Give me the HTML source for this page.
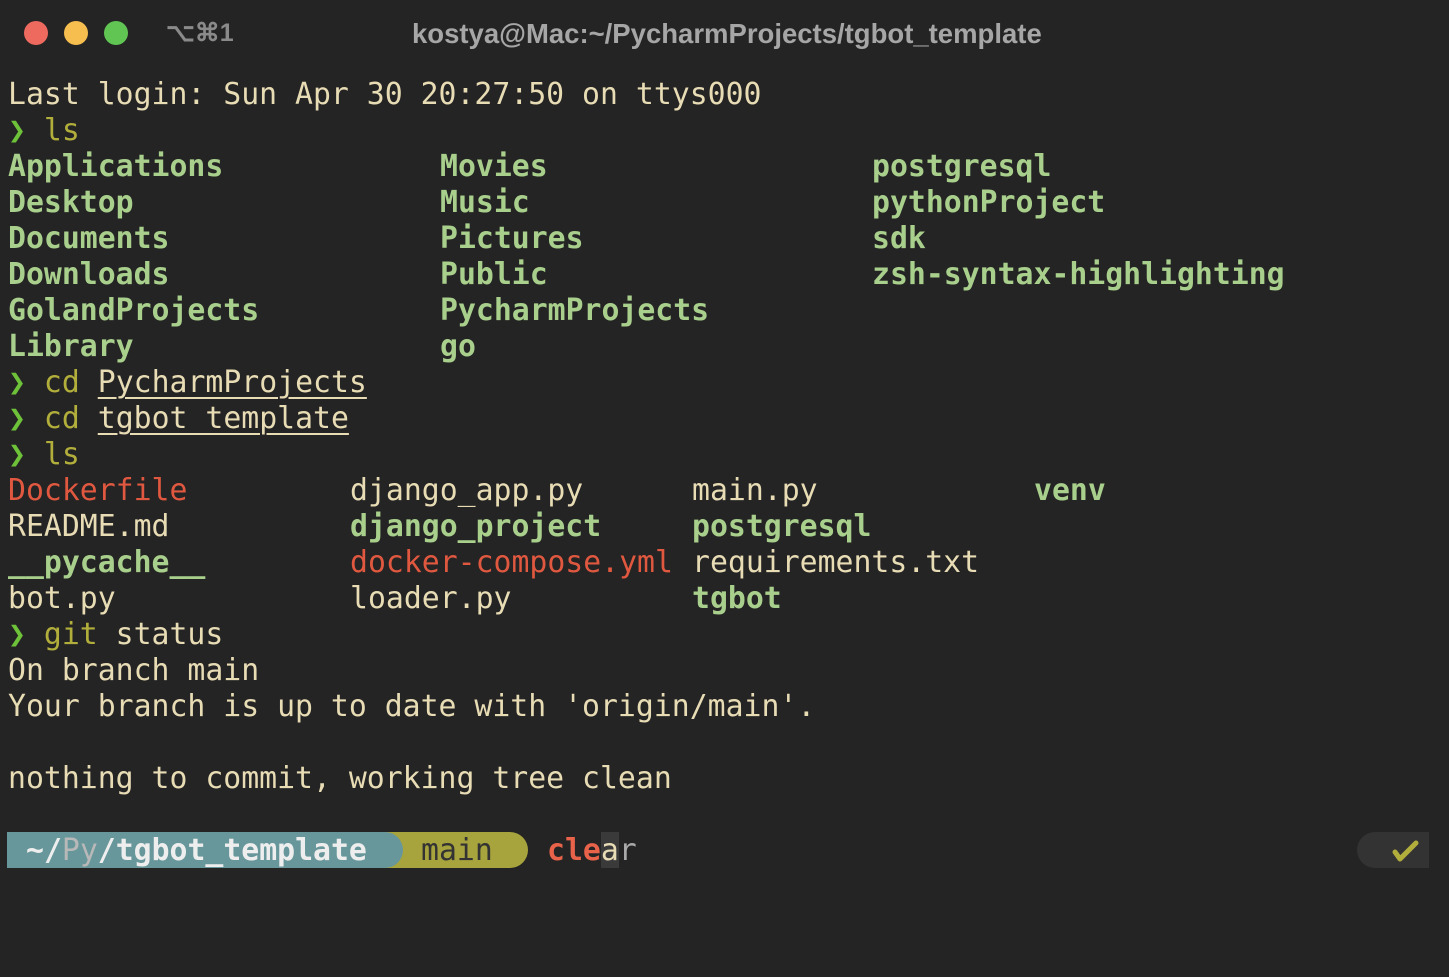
<!DOCTYPE html>
<html><head><meta charset="utf-8"><style>
html,body{margin:0;padding:0;background:#242424;width:1449px;height:977px;overflow:hidden}
.t{position:absolute;left:0;top:0;width:1449px;height:977px;background:#242424}
.tb{position:absolute;top:0;left:0;width:1449px;height:66px;font-family:"Liberation Sans",sans-serif;font-weight:bold;font-size:27.5px;color:#a6a6a6}
.dot{position:absolute;top:21px;width:24px;height:24px;border-radius:50%}
.term{position:absolute;left:8px;top:77px;font-family:"DejaVu Sans Mono",monospace;font-size:29.8px;line-height:36px;color:#e8dcb5}
.l{height:36px;position:relative;white-space:pre}
.c{position:absolute;top:0}
.g{color:#a9cf8c;font-weight:bold}
.r{color:#e0583f}
.a{color:#6ec23a}
.o{color:#b2ae3c}
.u{text-decoration:underline;text-underline-offset:5px;text-decoration-thickness:2px}
</style></head><body><div class="t">
<div class="tb">
<div class="dot" style="left:24px;background:#ee6a5f"></div>
<div class="dot" style="left:64px;background:#f5be4f"></div>
<div class="dot" style="left:104px;background:#61c554"></div>
<div style="position:absolute;left:166px;top:18px;color:#8a8a8a;font-size:25px">⌥⌘1</div>
<div style="position:absolute;left:412px;top:18px">kostya@Mac:~/PycharmProjects/tgbot_template</div>
</div>
<div class="term"><div class="l">Last login: Sun Apr 30 20:27:50 on ttys000</div><div class="l"><span class="a">❯</span> <span class="o">ls</span></div><div class="l g"><span class="c" style="left:0">Applications</span><span class="c" style="left:432px">Movies</span><span class="c" style="left:864px">postgresql</span></div><div class="l g"><span class="c" style="left:0">Desktop</span><span class="c" style="left:432px">Music</span><span class="c" style="left:864px">pythonProject</span></div><div class="l g"><span class="c" style="left:0">Documents</span><span class="c" style="left:432px">Pictures</span><span class="c" style="left:864px">sdk</span></div><div class="l g"><span class="c" style="left:0">Downloads</span><span class="c" style="left:432px">Public</span><span class="c" style="left:864px">zsh-syntax-highlighting</span></div><div class="l g"><span class="c" style="left:0">GolandProjects</span><span class="c" style="left:432px">PycharmProjects</span></div><div class="l g"><span class="c" style="left:0">Library</span><span class="c" style="left:432px">go</span></div><div class="l"><span class="a">❯</span> <span class="o">cd</span> <span class="u">PycharmProjects</span></div><div class="l"><span class="a">❯</span> <span class="o">cd</span> <span class="u">tgbot_template</span></div><div class="l"><span class="a">❯</span> <span class="o">ls</span></div><div class="l"><span class="c r" style="left:0">Dockerfile</span><span class="c" style="left:342px">django_app.py</span><span class="c" style="left:684px">main.py</span><span class="c g" style="left:1026px">venv</span></div><div class="l"><span class="c" style="left:0">README.md</span><span class="c g" style="left:342px">django_project</span><span class="c g" style="left:684px">postgresql</span></div><div class="l"><span class="c g" style="left:0">__pycache__</span><span class="c r" style="left:342px">docker-compose.yml</span><span class="c" style="left:684px">requirements.txt</span></div><div class="l"><span class="c" style="left:0">bot.py</span><span class="c" style="left:342px">loader.py</span><span class="c g" style="left:684px">tgbot</span></div><div class="l"><span class="a">❯</span> <span class="o">git</span> status</div><div class="l">On branch main</div><div class="l">Your branch is up to date with 'origin/main'.</div><div class="l"></div><div class="l">nothing to commit, working tree clean</div></div>
<div style="position:absolute;left:382px;top:832px;width:146px;height:36px;background:#a8a43d;border-radius:0 18px 18px 0"></div>
<div style="position:absolute;left:7px;top:832px;width:396px;height:36px;background:#67979b;border-radius:0 18px 18px 0"></div>
<div style="position:absolute;left:26px;top:833px;font-family:'DejaVu Sans Mono',monospace;font-size:29.8px;line-height:36px;white-space:pre;color:#eee;font-weight:bold">~/<span style="color:#b8b8b8;font-weight:normal">Py</span>/tgbot_template</div>
<div style="position:absolute;left:421px;top:833px;font-family:'DejaVu Sans Mono',monospace;font-size:29.8px;line-height:36px;color:#333">main</div>
<div style="position:absolute;left:601px;top:832px;width:18px;height:36px;background:#3a3a3a"></div>
<div style="position:absolute;left:547px;top:833px;font-family:'DejaVu Sans Mono',monospace;font-size:29.8px;line-height:36px;white-space:pre"><span style="color:#e8634a;font-weight:bold">cle</span><span style="color:#e8dcb5">a</span><span style="color:#aaa">r</span></div>
<div style="position:absolute;left:1357px;top:832px;width:72px;height:36px;background:#333;border-radius:18px 0 0 18px"></div>
<svg style="position:absolute;left:1390px;top:838px" width="30" height="26" viewBox="0 0 30 26"><path d="M5 14 L10 21 L26 5" fill="none" stroke="#b2ae3c" stroke-width="5" stroke-linecap="round" stroke-linejoin="round"/></svg>
</div></body></html>
